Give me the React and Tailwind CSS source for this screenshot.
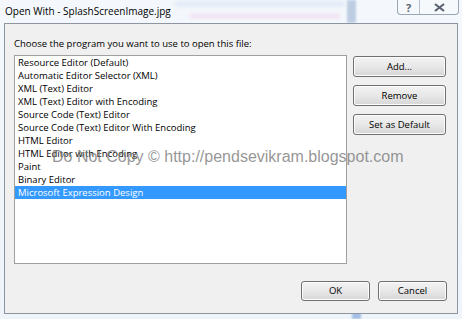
import React from "react";

const items = [
  "Resource Editor (Default)",
  "Automatic Editor Selector (XML)",
  "XML (Text) Editor",
  "XML (Text) Editor with Encoding",
  "Source Code (Text) Editor",
  "Source Code (Text) Editor With Encoding",
  "HTML Editor",
  "HTML Editor with Encoding",
  "Paint",
  "Binary Editor",
  "Microsoft Expression Design",
];

function Btn({ children, className = "" }) {
  return (
    <div
      className={
        "flex items-center justify-center rounded-[3px] border border-[#707070] bg-gradient-to-b from-[#f3f3f3] via-[#e8e8e8] to-[#d6d6d6] text-[9.5px] leading-none text-black shadow-[inset_0_0_0_1px_#fcfcfc] " +
        className
      }
    >
      {children}
    </div>
  );
}

export default function App() {
  return (
    <div
      className="relative h-[319px] w-[462px] overflow-hidden bg-gradient-to-b from-[#f4f8fc] to-[#eef4f9]"
      style={{ fontFamily: '"Open Sans", "Noto Sans", sans-serif' }}
    >
      {/* blurred background glass hints */}
      <div className="absolute left-[175px] top-[2px] h-[4px] w-[170px] bg-[#c8d8f0] opacity-60 blur-[2px]" />
      <div className="absolute left-[190px] top-[14px] h-[4px] w-[150px] bg-[#f0c8e8] opacity-60 blur-[2px]" />
      <div className="absolute left-[347px] top-0 h-[23px] w-[9px] bg-[#a8bcd8] opacity-70 blur-[1px]" />
      <div className="absolute left-[352px] top-[313px] h-[6px] w-[9px] bg-[#8fb0e0] opacity-80 blur-[1px]" />

      {/* title bar */}
      <div className="flex h-[23px] items-start">
        <div className="pl-[5px] pt-[4px] text-[10px] leading-[15px] text-black">
          Open With - SplashScreenImage.jpg
        </div>
        <div className="ml-auto mr-[3px] flex h-[15px] w-[62px] overflow-hidden rounded-b-[4px] border border-t-0 border-[#9aa6b4] bg-[#f7f9fb]/70">
          <div className="flex flex-1 items-center justify-center border-r border-[#b8c2cc] text-[11px] font-bold leading-none text-[#5a6470]">
            ?
          </div>
          <div className="flex w-[38px] items-center justify-center">
            <svg width="11" height="9" viewBox="0 0 11 9">
              <path d="M1 1 L10 8 M10 1 L1 8" stroke="#5a6470" strokeWidth="2.2" />
            </svg>
          </div>
        </div>
      </div>

      {/* dialog body */}
      <div className="relative ml-[4px] h-[291px] w-[454px] border border-[#8d96a0] bg-[#f0f0f0]">
        <div className="pl-[9px] pt-[12px] text-[9.5px] leading-[15px] text-black">
          Choose the program you want to use to open this file:
        </div>
        <div className="mt-[4px] flex pl-[9px]">
          <div className="h-[209px] w-[333px] border border-[#a0a0a0] bg-white">
            {items.map((t, i) => (
              <div
                key={t}
                className={
                  "h-[13px] pl-[3px] text-[9.5px] leading-[13px] " +
                  (i === items.length - 1 ? "bg-[#3399ff] text-white" : "text-black")
                }
              >
                {t}
              </div>
            ))}
          </div>
          <div className="ml-[6px] flex flex-col gap-[8px] pt-[1px]">
            <Btn className="h-[21px] w-[93px]">Add...</Btn>
            <Btn className="h-[21px] w-[93px]">Remove</Btn>
            <Btn className="h-[21px] w-[93px]">Set as Default</Btn>
          </div>
        </div>
        <div className="mt-[17px] flex justify-end gap-[8px] pr-[10px]">
          <Btn className="h-[20px] w-[69px]">OK</Btn>
          <Btn className="h-[20px] w-[69px]">Cancel</Btn>
        </div>
      </div>

      {/* watermark */}
      <div
        className="pointer-events-none absolute left-[52px] top-[148px] text-[16px] leading-[18px] text-[#7a7a7a]/80"
        style={{ fontFamily: '"Liberation Sans", Arial, sans-serif' }}
      >
        Do Not Copy © http://pendsevikram.blogspot.com
      </div>
    </div>
  );
}
